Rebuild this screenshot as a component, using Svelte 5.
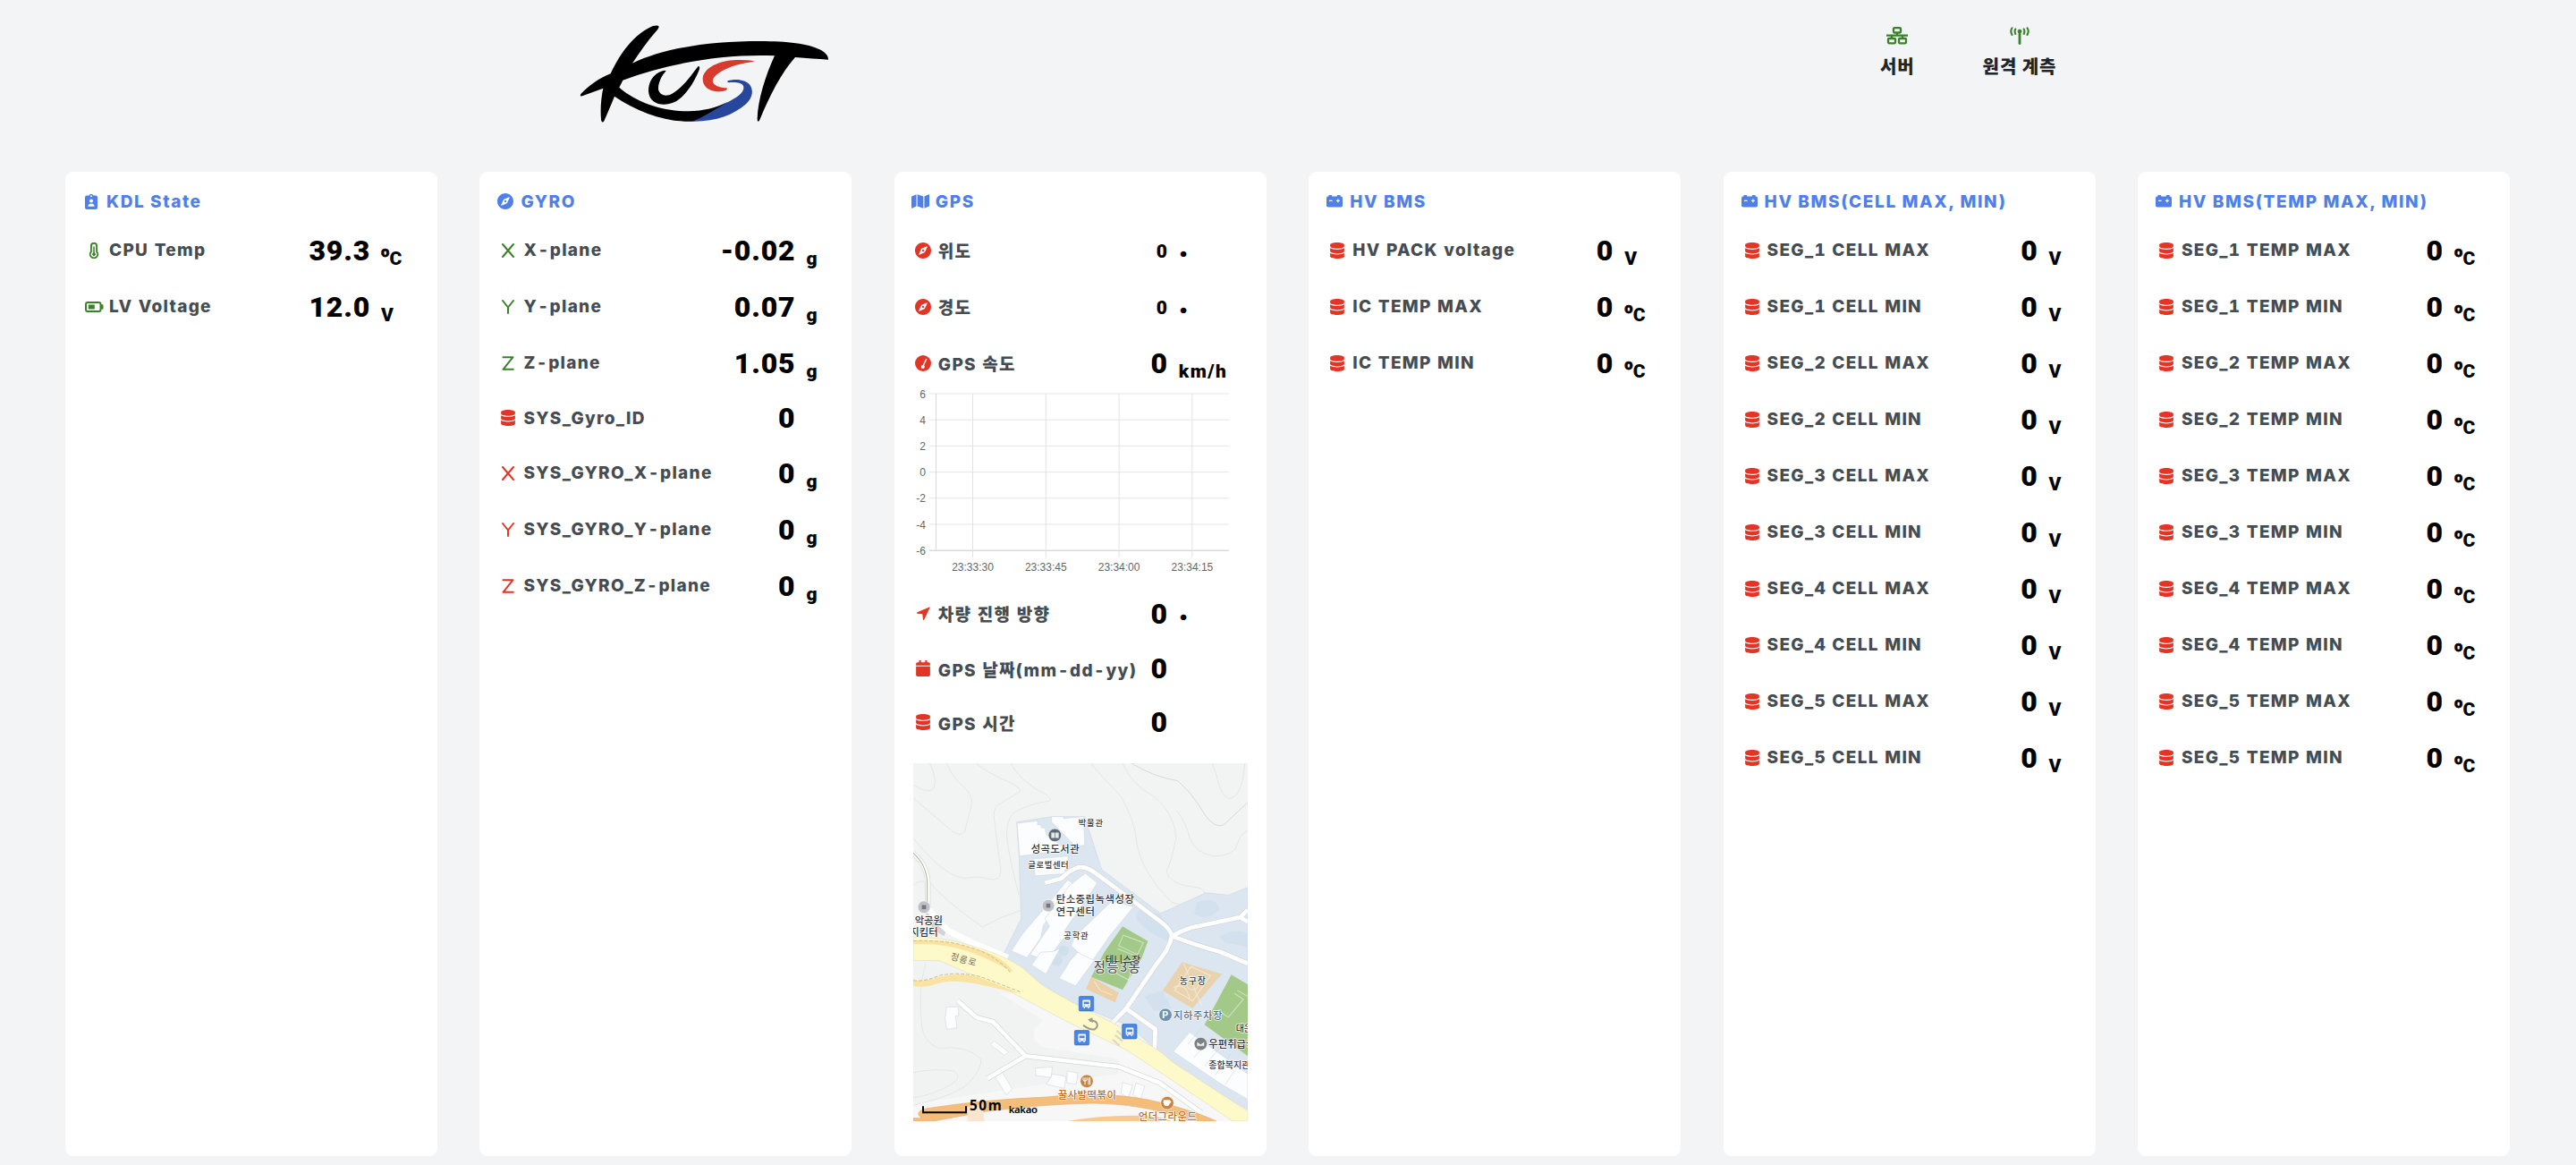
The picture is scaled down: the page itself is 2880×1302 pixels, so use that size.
<script>
  const seg = (kind, unit) =>
    [1, 2, 3, 4, 5].flatMap((n) => [
      { icon: 'db', label: `SEG_${n} ${kind} MAX`, value: '0', unit },
      { icon: 'db', label: `SEG_${n} ${kind} MIN`, value: '0', unit },
    ]);

  const cards = [
    {
      title: 'KDL State', icon: 'badge', unitWidth: 63,
      rows: [
        { icon: 'thermo', ok: true, label: 'CPU Temp', value: '39.3', unit: 'ºC' },
        { icon: 'battery', ok: true, label: 'LV Voltage', value: '12.0', unit: 'V' },
      ],
    },
    {
      title: 'GYRO', icon: 'compass', unitWidth: 51,
      rows: [
        { icon: 'x', ok: true, label: 'X-plane', value: '-0.02', unit: 'g' },
        { icon: 'y', ok: true, label: 'Y-plane', value: '0.07', unit: 'g' },
        { icon: 'z', ok: true, label: 'Z-plane', value: '1.05', unit: 'g' },
        { icon: 'db', label: 'SYS_Gyro_ID', value: '0', unit: '' },
        { icon: 'x', label: 'SYS_GYRO_X-plane', value: '0', unit: 'g' },
        { icon: 'y', label: 'SYS_GYRO_Y-plane', value: '0', unit: 'g' },
        { icon: 'z', label: 'SYS_GYRO_Z-plane', value: '0', unit: 'g' },
      ],
    },
    {
      title: 'GPS', icon: 'map', unitWidth: 98,
      rows: [
        { icon: 'compass', label: '위도', value: '0', unit: '.', small: true },
        { icon: 'compass', label: '경도', value: '0', unit: '.', small: true },
        { icon: 'gauge', label: 'GPS 속도', value: '0', unit: 'km/h', chart: true },
        { icon: 'arrow', label: '차량 진행 방향', value: '0', unit: '.' },
        { icon: 'calendar', label: 'GPS 날짜(mm-dd-yy)', value: '0', unit: '' },
        { icon: 'db', label: 'GPS 시간', value: '0', unit: '' },
      ],
      map: true,
    },
    {
      title: 'HV BMS', icon: 'car', unitWidth: 63,
      rows: [
        { icon: 'db', label: 'HV PACK voltage', value: '0', unit: 'V' },
        { icon: 'db', label: 'IC TEMP MAX', value: '0', unit: 'ºC' },
        { icon: 'db', label: 'IC TEMP MIN', value: '0', unit: 'ºC' },
      ],
    },
    { title: 'HV BMS(CELL MAX, MIN)', icon: 'car', unitWidth: 52, rows: seg('CELL', 'V') },
    { title: 'HV BMS(TEMP MAX, MIN)', icon: 'car', unitWidth: 62, rows: seg('TEMP', 'ºC') },
  ];

  const yTicks = [6, 4, 2, 0, -2, -4, -6].map((v, i) => ({ v, y: 3 + i * 29.2 }));
  const xTicks = ['23:33:30', '23:33:45', '23:34:00', '23:34:15'].map((t, i) => ({ t, x: 87.5 + i * 81.8 }));
</script>

{#snippet icon(name)}
  {#if name === 'db'}
    <svg class="ic" viewBox="0 0 448 512" width="16" height="18"><path d="M448 73.143v45.714C448 159.143 347.667 192 224 192S0 159.143 0 118.857V73.143C0 32.857 100.333 0 224 0s224 32.857 224 73.143zM448 176v102.857C448 319.143 347.667 352 224 352S0 319.143 0 278.857V176c48.125 33.143 136.208 48.572 224 48.572S399.874 209.143 448 176zm0 160v102.857C448 479.143 347.667 512 224 512S0 479.143 0 438.857V336c48.125 33.143 136.208 48.572 224 48.572S399.874 369.143 448 336z" /></svg>
  {:else if name === 'compass'}
    <svg class="ic" viewBox="0 8 496 496" width="18" height="18"><path d="M225.38 233.37c-12.5 12.5-12.5 32.76 0 45.25 12.49 12.5 32.76 12.5 45.25 0 12.5-12.5 12.5-32.76 0-45.25-12.5-12.49-32.76-12.49-45.25 0zM248 8C111.03 8 0 119.03 0 256s111.03 248 248 248 248-111.03 248-248S384.97 8 248 8zm126.14 148.05L308.17 300.4a31.938 31.938 0 0 1-15.77 15.77l-144.34 65.97c-16.65 7.61-33.81-9.55-26.2-26.2l65.98-144.35a31.938 31.938 0 0 1 15.77-15.77l144.34-65.97c16.65-7.6 33.8 9.55 26.19 26.2z" /></svg>
  {:else if name === 'map'}
    <svg class="ic" viewBox="0 0 576 512" width="20" height="18"><path d="M0 117.66v346.32c0 11.32 11.43 19.06 21.94 14.86L160 416V32L20.12 87.95A32.006 32.006 0 0 0 0 117.66zM192 416l192 64V96L192 32v384zM554.06 33.16L416 96v384l139.88-55.95A31.996 31.996 0 0 0 576 394.34V48.02c0-11.32-11.43-19.06-21.94-14.86z" /></svg>
  {:else if name === 'calendar'}
    <svg class="ic" viewBox="0 0 448 512" width="16" height="18"><path d="M0 192h448v272c0 26.500-21.500 48-48 48H48c-26.500 0-48-21.500-48-48zM448 160v-48c0-26.500-21.500-48-48-48h-48V12c0-6.600-5.400-12-12-12h-40c-6.600 0-12 5.400-12 12v52H160V12c0-6.600-5.400-12-12-12h-40c-6.600 0-12 5.400-12 12v52H48C21.500 64 0 85.500 0 112v48z" /></svg>
  {:else if name === 'gauge'}
    <svg class="ic" viewBox="0 0 18 18" width="18" height="18"><circle cx="9" cy="9" r="9" /><path d="M12.600 4.500L9.300 11.500" stroke="#fff" stroke-width="1.500" stroke-linecap="round" /><circle cx="8.800" cy="13" r="2" fill="#fff" /></svg>
  {:else if name === 'arrow'}
    <svg class="ic" viewBox="0 0 18 18" width="18" height="18"><path d="M16.600 1.900Q16.900 1.200 16.100 1.400L2.500 7.200Q1.200 8.300 2.600 8.800L8.300 9.300L8.900 15.300Q9.400 16.500 10.300 15.400Z" /></svg>
  {:else if name === 'thermo'}
    <svg class="ic" viewBox="0 0 12 18" width="12" height="18" fill="none" stroke="currentColor"><path d="M2.900 3.900a3.100 3.100 0 0 1 6.200 0v6.400a4.200 4.200 0 1 1-6.200 0z" stroke-width="1.900" /><path d="M6 4.500v8" stroke-width="1.500" /><circle cx="6" cy="13.200" r="1.400" fill="currentColor" /></svg>
  {:else if name === 'battery'}
    <svg class="ic" viewBox="0 0 21 12" width="21" height="12"><rect x="1" y="1" width="16.500" height="10" rx="2" fill="none" stroke="currentColor" stroke-width="2" /><path d="M18 3.200h1.300q1.200 0 1.200 1v3.600q0 1-1.200 1H18zM3.800 3.500h7v5h-7z" /></svg>
  {:else if name === 'badge'}
    <svg class="ic" viewBox="0 0 14 18" width="14" height="18"><path d="M2 2.600h2.600a2.500 2.500 0 0 1 4.800 0H12a2 2 0 0 1 2 2V16a2 2 0 0 1-2 2H2a2 2 0 0 1-2-2V4.600a2 2 0 0 1 2-2z" /><circle cx="7" cy="3.300" r="1" fill="#fff" /><circle cx="7" cy="8.600" r="2" fill="#fff" /><path d="M3.400 14.800c0-4.400 7.200-4.400 7.200 0z" fill="#fff" /></svg>
  {:else if name === 'car'}
    <svg class="ic" viewBox="0 0 18 14" width="18" height="14"><path d="M2.300 1.600V.9q0-.8.8-.8h2.400q.8 0 .8.8v.7h5.400V.9q0-.8.8-.8h2.400q.8 0 .8.800v.7h.5q1.800 0 1.800 1.800v8.400q0 1.800-1.800 1.800H1.800Q0 13.600 0 11.800V3.400q0-1.800 1.800-1.800z" /><path d="M3 6.400h3.600M11 6.400h3.800M12.900 4.500v3.800" stroke="#fff" stroke-width="1.200" /></svg>
  {:else}
    <svg class="ic axis" viewBox="0 0 14 16" width="14" height="16">
      {#if name === 'x'}<path d="M1 1l12 14M13 1L1 15" />
      {:else if name === 'y'}<path d="M1 1l6 7.500L13 1M7 8.500V15" />
      {:else}<path d="M1.500 1.200H12.500L1.500 14.800H12.800" />{/if}
    </svg>
  {/if}
{/snippet}

{#snippet pin(x, y, r, color)}
  <circle cx={x} cy={y} r={r} fill={color} stroke="#fff" stroke-width="2" />
{/snippet}

{#snippet bus(x, y)}
  <g transform="translate({x} {y})">
    <rect width="49" height="49" rx="4" fill="#4a86e2" stroke="#3569c0" stroke-width="2" />
    <path d="M15 12h20q3 0 3 4v20h-4v4h-4v-4H20v4h-4v-4h-4V16q0-4 3-4z" fill="#fff" />
    <path d="M16 18h18v8H16zM16 30h4v3h-4zM30 30h4v3h-4z" fill="#4a86e2" />
  </g>
{/snippet}

<div class="page">
  <header>
    <svg class="logo" viewBox="0 0 1020 480" width="340" height="160" role="img" aria-label="KUST">
      <path d="M349 87C352 92 345 100 336 110C310 140 285 175 261 212C370 160 520 138 690 138C780 138 850 146 889 166C907 175 919 187 918 200C885 198 846 195 807 192C760 245 722 320 688 402C684 410 680 408 680 398C682 335 707 255 738 187C570 180 385 211 229 269L217 293C275 345 370 374 450 373C500 372 543 361 580 342C545 369 500 397 463 407C370 410 280 376 201 323C190 350 177 380 166 406C162 413 156 409 156 400C153 365 156 328 163 296L93 322C84 325 85 318 91 312C120 284 150 262 188 247C220 177 270 111 330 87Q345 84 349 87Z" />
      <path d="M374 238C360 252 344 283 349 304C355 321 375 324 393 315C430 294 457 254 482 222Q488 220 486 232C468 278 438 325 401 343C365 359 318 350 315 306C315 275 330 248 362 238Q371 235 374 238Z" />
      <path d="M671 207C620 211 560 231 536 258C519 280 545 294 577 295C582 299 575 306 556 307C520 309 495 291 497 261C503 226 552 203 610 201Q665 200 671 207Z" fill="#d83b2d" />
      <path d="M581 271C600 264 635 264 653 282C669 302 665 327 642 349C600 386 540 408 463 407C505 389 540 366 576 345C608 328 638 311 634 290C630 275 600 275 584 277Q577 275 581 271Z" fill="#27479c" />
    </svg>
    <nav class="status">
      <div class="state">
        <svg class="ic" viewBox="0 0 24 20" width="24" height="20" fill="none" stroke="currentColor" stroke-width="2.300"><rect x="8" y="1.200" width="8" height="5.300" rx="1" /><rect x="2" y="13" width="8" height="5.300" rx="1" /><rect x="14" y="13" width="8" height="5.300" rx="1" /><path d="M0 9.700h24M12 6.500v3.200M6 9.700V13M18 9.700V13" /></svg>
        <span>서버</span>
      </div>
      <div class="state">
        <svg class="ic" viewBox="0 0 24 20" width="24" height="20" fill="none" stroke="currentColor" stroke-width="2.100" stroke-linecap="round"><path d="M12 6v12.500" stroke-width="2.800" /><circle cx="12" cy="5" r="1.900" fill="currentColor" stroke-width="1" /><path d="M7.300 2.500q-1.400 2.700 0 5.400M16.700 2.500q1.400 2.700 0 5.400M3.500 1.300q-2.400 3.800 0 7.600M20.500 1.300q2.400 3.800 0 7.600" /></svg>
        <span>원격 계측</span>
      </div>
    </nav>
  </header>

  <main>
    {#each cards as card}
      <section class="card" style="--unit: {card.unitWidth}px">
        <h2><i>{@render icon(card.icon)}</i>{card.title}</h2>
        {#each card.rows as row}
          <div class="row" class:plain={!row.unit} class:small={row.small} class:dot={row.unit === '.'}>
            <i class:ok={row.ok}>{@render icon(row.icon)}</i>
            <span class="label">{row.label}</span>
            <span class="value">{row.value}</span>
            <span class="unit">{#if row.unit === 'ºC'}<span class="deg">º</span>C{:else}{row.unit}{/if}</span>
          </div>
          {#if row.chart}
            <svg class="chart" viewBox="0 0 416 217" width="416" height="217">
              {#each yTicks as t}
                <path d="M39 {t.y}H374" stroke={t.v === -6 ? '#c8c8c8' : '#e5e5e5'} />
                <text x="35" y={t.y + 4.5} text-anchor="end">{t.v}</text>
              {/each}
              <path d="M46.500 3V178" stroke="#d8d8d8" />
              {#each xTicks as t}
                <path d="M{t.x} 3V186" stroke="#e2e2e2" />
                <text x={t.x} y="201.300" text-anchor="middle">{t.t}</text>
              {/each}
            </svg>
          {/if}
        {/each}
        {#if card.map}
          <svg class="map" viewBox="33 39 1122 1199" width="374" height="400" preserveAspectRatio="none">
            <rect x="33" y="39" width="1122" height="1199" fill="#f2f4f3" />
            <path d="M33 810H420L760 1010L1155 1120V1238H33Z" fill="#f7f7f7" />
            <path d="M33 705Q180 730 290 790L470 900Q400 950 470 990L720 1030V1080L430 1120L33 1180Z" fill="#f1f3f2" />
            <!-- contour lines -->
            <g fill="none" stroke="#dedfdd" stroke-width="2">
              <path d="M88 39Q115 90 102 122Q85 145 33 110M145 39Q165 90 205 120Q235 150 228 180L205 270Q195 285 165 268L33 155M243 39Q280 70 360 105Q400 125 390 135L315 180Q300 195 305 230L327 400Q325 435 290 428Q250 415 220 423Q150 435 33 290M360 39Q390 100 480 145Q500 160 490 165Q420 175 370 205Q345 230 347 280Q350 340 388 480M33 450Q50 425 90 440Q140 500 265 588L330 555L395 532M628 39Q680 100 730 150Q775 230 782 300Q795 400 900 505L935 515M735 39Q765 110 840 150Q905 200 915 285Q905 350 883 400Q890 445 985 455Q1010 460 1010 475M1035 39Q1050 70 1058 110Q1085 185 1120 140Q1140 110 1145 39M915 195Q950 240 960 290Q980 340 1040 350Q1110 350 1120 310Q1130 275 1155 265" />
              <path d="M765 39Q840 85 920 98Q970 140 1010 210Q1045 260 1075 245L1155 170" stroke="#c9cac8" />
              <path d="M75 710Q50 790 60 900Q60 970 120 995Q210 980 260 1030Q265 1060 220 1110Q180 1150 33 1185M33 1075Q110 1060 170 1070Q200 1090 160 1115Q100 1150 33 1160" />
            </g>
            <!-- campus grounds -->
            <path d="M380 236L497 218L608 218L665 395L862 542L1015 473L1090 481L1155 455V1200L905 1050L760 920L560 840L330 690L395 560L388 350Z" fill="#dbe6f0" stroke="#cfd8e0" stroke-width="2" />
            <path d="M790 530L860 545L895 600V640Q820 610 780 560ZM985 505Q1050 480 1060 530Q1020 570 975 545ZM1060 620Q1110 590 1155 610V655L1080 640ZM810 820L870 800L900 860L840 870ZM900 1080L1100 1150L1155 1190L1100 1150Z" fill="#d2e1ed" />
            <circle cx="537" cy="668" r="18" fill="#cfdfec" />
            <circle cx="514" cy="698" r="20" fill="#cfdfec" />
            <!-- buildings -->
            <g fill="#fcfdfe" stroke="#d3d9e0" stroke-width="2">
              <path d="M381 240L450 232V245H462V255H475L480 280L510 300L530 315L545 330L390 350Z" />
              <path d="M497 218H537V224L605 217L608 314L575 316L540 280L497 235Z" />
              <path d="M433 360L552 350V385L540 398L555 408L442 416Z" />
              <path d="M551 430L576 446L520 520L470 580L460 625L415 690L362 668L400 610L460 540Z" />
              <path d="M610 408L651 440L575 550L540 600L548 612L480 700L425 680L490 585L475 560L555 450Z" />
              <path d="M700 500L772 520L690 620L635 700L605 690L562 650L575 620Z" />
              <path d="M500 670L525 660L478 745L430 715L460 672Z" />
              <path d="M585 672L640 700L578 785L522 760L560 700Z" />
              <path d="M960 940L1155 1080V1165L1060 1110L905 1005Z" />
              <path d="M145 855H185V885H175L180 925L145 930L140 895ZM305 970L352 1005L340 1018L292 982ZM442 1060L500 1057L495 1092L445 1085ZM500 1080L545 1088L540 1128L480 1115ZM550 1070L585 1077L580 1115L548 1110ZM735 1108L768 1118L755 1160L730 1145ZM780 1110L810 1120L795 1165L770 1150ZM305 1085L332 1075L365 1130L345 1150Z" />
              <path d="M1000 925L955 980M1035 955L975 1025M1065 985L1010 1055M1100 1010L1045 1085M1130 1040L1080 1115" fill="none" />
            </g>
            <!-- courts -->
            <path d="M735 585L820 635L800 690L735 798L630 755L675 670Z" fill="#a3c988" />
            <path d="M630 755L722 808L710 840L613 795Z" fill="#ecd0a8" />
            <path d="M935 705L1068 745L970 860L870 800Z" fill="#e9d3ae" />
            <path d="M1100 747L1155 780V1020L1010 915Z" fill="#a3c988" />
            <g fill="none" stroke="#fff" stroke-opacity=".5" stroke-width="3">
              <path d="M738 615L805 640L785 680L722 650ZM718 660L780 685L755 765L690 730M640 770L660 800L700 815M965 720L1030 750L970 835L910 800ZM1120 800L1155 820M1110 810L1140 830L1090 890L1060 870M940 710L1000 850M905 790Q950 770 960 830" />
              <circle cx="970" cy="778" r="20" />
            </g>
            <!-- minor roads -->
            <g fill="none" stroke-linejoin="round">
              <g stroke="#d2d4d6" stroke-width="18">
                <path d="M475 440L530 425Q560 395 590 387Q620 385 655 415L850 560Q900 595 900 620Q890 665 850 710L748 860L700 910M900 618Q935 600 965 590L1130 555L1155 530M1130 555L1155 570M900 618Q1000 655 1060 670L1155 710M745 860L845 930L842 1010M33 340Q80 380 82 440V510Q80 580 140 610" />
                <path d="M182 835L245 890L300 905L410 1020L720 1055L860 1110L1000 1210M410 1020L282 1095" />
              </g>
              <g stroke="#fff" stroke-width="14">
                <path d="M475 440L530 425Q560 395 590 387Q620 385 655 415L850 560Q900 595 900 620Q890 665 850 710L748 860L700 910M900 618Q935 600 965 590L1130 555L1155 530M1130 555L1155 570M900 618Q1000 655 1060 670L1155 710M745 860L845 930L842 1010M33 340Q80 380 82 440V510" />
                <path d="M182 835L245 890L300 905L410 1020L720 1055L860 1110L1000 1210M410 1020L282 1095" />
              </g>
              <path d="M33 340Q78 380 80 440V505" stroke="#a7b08b" stroke-width="3" />
              <path d="M85 530L150 600L230 640L350 690" stroke="#fff" stroke-width="20" />
            </g>
            <!-- main road -->
            <path d="M33 622Q130 620 210 645Q340 680 400 725L470 786Q580 850 700 908L860 1004L905 1042L1155 1205V1238H1105L900 1100L750 1000L560 910L370 810L270 765L120 700H33Z" fill="#fdf9c9" stroke="#e2dfc0" stroke-width="2" />
            <path d="M33 632Q150 630 220 655Q330 680 370 740Q280 690 210 667Q130 640 33 645ZM33 767Q80 770 120 755Q200 735 270 762L395 812Q280 785 230 775Q150 760 90 785Q60 790 33 785Z" fill="#fae3a0" />
            <path d="M33 634Q150 630 220 655Q300 675 360 740M33 767Q80 770 120 750Q200 735 270 758L395 806" fill="none" stroke="#cdbf9a" stroke-width="3" stroke-dasharray="12 6" />
            <path d="M710 950L735 970M702 965L725 985M715 935L740 955" stroke="#ddd9c3" stroke-width="7" />
            <!-- lower road -->
            <path d="M50 1215Q50 1200 80 1195Q280 1165 480 1157Q700 1135 860 1175Q980 1205 1050 1238H960Q820 1180 640 1178Q480 1180 280 1205L100 1238H33V1228H60Z" fill="#f4be7a" stroke="#e7ae6d" stroke-width="2" />
            <path d="M550 1238Q700 1212 850 1222L900 1238Z" fill="#f6c98e" />
            <path d="M215 1190L265 1180L272 1238H215Z" fill="#fae6d0" />
            <path d="M603 917Q630 935 642 930Q655 922 648 908Q640 899 624 901" fill="none" stroke="#9b9a90" stroke-width="6" />
            <path d="M618 898L634 891L636 909Z" fill="#9b9a90" />

            <!-- points of interest -->
            {@render pin(508, 280, 22, '#5f6b78')}
            <path d="M496 271h12v18h-12zM510 271h11v18h-11z" fill="#fff" fill-opacity=".85" />
            {@render pin(486, 516, 21, '#bfc1c8')}
            <rect x="479" y="509" width="14" height="14" fill="#777" />
            {@render pin(69, 521, 21, '#bfc1c8')}
            <rect x="62" y="514" width="14" height="14" fill="#777" />
            {@render pin(879, 882, 22, '#6f93ad')}
            {@render pin(997, 979, 22, '#7b8086')}
            <path d="M984 971h26v16h-26zM984 971l13 9 13-9" fill="#eee" stroke="#7b8086" stroke-width="2" />
            {@render pin(615, 1104, 22, '#c8843f')}
            <path d="M609 1092v24M603 1092v8q6 8 12 0v-8M621 1092v24M626 1092v24" stroke="#fff" stroke-width="3" fill="none" />
            {@render pin(885, 1177, 22, '#c8843f')}
            <path d="M873 1168h20v9q-2 10-10 10t-10-10zM893 1170q9 2 0 9" fill="#fff" stroke="#fff" stroke-width="2" />
            {@render bus(589, 820)}
            {@render bus(574, 934)}
            {@render bus(734, 913)}

            <g class="names">
              <text x="587" y="249" font-size="28" textLength="82">박물관</text>
              <text x="428" y="338" font-size="34" textLength="162">성곡도서관</text>
              <text x="418" y="390" font-size="28" textLength="136">글로벌센터</text>
              <text x="512" y="508" font-size="34" textLength="262">탄소중립녹색성장</text>
              <text x="512" y="548" font-size="34" textLength="130">연구센터</text>
              <text x="38" y="578" font-size="34" textLength="94">악공원</text>
              <text x="22" y="619" font-size="34" textLength="94">지킴터</text>
              <text x="538" y="626" font-size="28" textLength="82">공학관</text>
              <text x="638" y="736" font-size="43" textLength="156" class="soft">정릉3동</text>
              <text x="677" y="706" font-size="31" textLength="118" class="over">테니스장</text>
              <text x="926" y="780" font-size="30" textLength="88">농구장</text>
              <text x="1115" y="938" font-size="30">대운동장</text>
              <text x="906" y="895" font-size="34" textLength="163" class="park">지하주차장</text>
              <text x="1024" y="992" font-size="34">우편취급국</text>
              <text x="1024" y="1061" font-size="30">종합복지관</text>
              <text x="518" y="1162" font-size="34" textLength="196" class="food">꿀사발떡볶이</text>
              <text x="788" y="1236" font-size="34" textLength="196" class="food">언더그라운드</text>
              <text x="158" y="696" font-size="30" textLength="88" class="road" transform="rotate(15 158 690)">정릉로</text>
              <text x="868" y="893" font-size="32" class="letter">P</text>
            </g>
            <path d="M66 1188V1209H210V1188" fill="none" stroke="#000" stroke-width="6" />
            <text x="222" y="1202" class="scale" textLength="107">50m</text>
            <text x="353" y="1210" class="brand" textLength="97">kakao</text>
          </svg>
        {/if}
      </section>
    {/each}
  </main>
</div>

<style>
  :global(body) { background: #f2f4f6; }
  .page {
    box-sizing: border-box;
    width: 2880px;
    height: 1302px;
    overflow: hidden;
    font-family: Inter, 'Noto Sans CJK KR', sans-serif;
    background: #f2f4f6;
  }
  header { display: flex; height: 192px; padding-left: 620px; }
  .logo { flex: none; }
  .status { display: flex; gap: 76px; padding-top: 30px; margin-left: 1142px; }
  .state {
    display: flex;
    flex-direction: column;
    align-items: center;
    gap: 10px;
    color: #3a8228;
  }
  .state span {
    color: #212529;
    font: 900 20px/28px 'Noto Sans CJK KR', sans-serif;
    letter-spacing: 0.9px;
    white-space: nowrap;
  }
  main {
    display: grid;
    grid-template-columns: repeat(6, 416px);
    justify-content: space-between;
    height: 1100px;
    padding: 0 74px 0 73px;
  }
  .card { overflow: hidden; border-radius: 9px; background: #fff; }
  h2 {
    display: flex;
    align-items: center;
    height: 34px;
    margin: 16px 0 6px;
    padding-left: 12px;
    color: #4f80ea;
    font-size: 19px;
    font-weight: 800;
    letter-spacing: 1.6px;
    white-space: nowrap;
  }
  i { display: flex; flex: none; align-items: center; justify-content: center; width: 34px; color: #e43426; }
  h2 i { color: inherit; }
  i.ok { color: #3a8228; }
  .ic { display: block; fill: currentColor; }
  .state .ic { fill: none; }
  .ic[fill='none'] { fill: none; }
  .axis { fill: none; stroke: currentColor; stroke-width: 2; stroke-linecap: round; stroke-linejoin: round; }
  .row {
    display: grid;
    grid-template-columns: 34px 1fr auto var(--unit);
    align-items: center;
    height: 63px;
    padding-left: 15px;
  }
  .row.plain { height: 60px; }
  .label {
    color: #454c52;
    font-family: Inter, 'Noto Sans CJK KR', sans-serif;
    font-size: 19px;
    font-weight: 800;
    font-variant-numeric: tabular-nums;
    letter-spacing: 1.3px;
    white-space: nowrap;
  }
  .value, .unit { color: #000; font-family: Roboto, sans-serif; font-weight: 900; }
  .value { margin-right: 12px; font-size: 32px; line-height: 36px; letter-spacing: 0.8px; }
  .unit { padding-top: 19px; font-size: 21px; line-height: 24px; letter-spacing: 1.4px; }
  .deg {
    margin-right: -1px;
    font-family: 'Liberation Sans', sans-serif;
    font-size: 25px;
    font-weight: 700;
    line-height: 1px;
    -webkit-text-stroke: 0.8px #000;
  }
  .small .value { padding-top: 3px; font-size: 21px; line-height: 24px; }
  .dot .unit { padding: 0 0 9px; font-size: 36px; }
  .chart { display: block; overflow: visible; }
  .chart path { fill: none; stroke-width: 1; }
  .chart text { fill: #666; font: 12px 'Liberation Sans', sans-serif; }
  .map { display: block; margin: 16px 0 0 21px; }
  .names {
    fill: #30343a;
    font-family: 'Noto Sans CJK KR', sans-serif;
    font-weight: 500;
    paint-order: stroke;
    stroke: #fff;
    stroke-width: 4px;
    stroke-linejoin: round;
  }
  .soft { fill: #55585c; }
  .over { stroke-width: 1px; }
  .park { fill: #4d7189; }
  .food { fill: #b96d2c; }
  .road { fill: #77735f; stroke: none; font-weight: 400; }
  .letter { fill: #fff; stroke: none; font-family: Roboto, sans-serif; font-weight: 700; }
  .scale { font: 700 46px 'Noto Sans', sans-serif; }
  .brand { font: 600 34px 'Noto Sans', sans-serif; }
</style>
